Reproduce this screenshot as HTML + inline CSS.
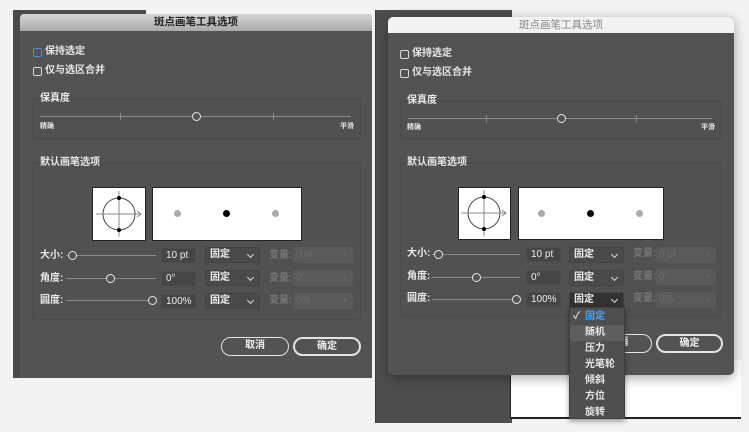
<!DOCTYPE html>
<html><head><meta charset="utf-8"><style>
*{margin:0;padding:0;box-sizing:border-box}
body{width:749px;height:432px;background:#f3f3f3;position:relative;overflow:hidden;font-family:"Liberation Sans","Noto Sans CJK SC",sans-serif;font-size:10px;color:#e8e8e8;font-weight:bold}
.a{position:absolute}
.dlg{background:#535353}
.t{position:absolute;white-space:nowrap;line-height:12px}
.cb{position:absolute;width:9px;height:9px;border:1px solid #d8d8d8;border-radius:2px}
.grp{position:absolute;border:1px solid #4b4b4b;border-radius:3px;background:#515151}
.ln{position:absolute;height:1px;background:#8a8a8a}
.knob{position:absolute;width:9px;height:9px;border:1.5px solid #e8e8e8;border-radius:50%;background:#535353}
.inp{position:absolute;height:15px;background:#464646;border:1px solid #4c4c4c;font-size:10px;line-height:13px;padding-left:4px;color:#eee;font-weight:normal}
.dd{position:absolute;height:16px;background:#4a4a4a;border:1px solid #444;border-radius:2px;line-height:14px;padding-left:4px;font-size:10px;color:#eee}
.dd:after{content:"";position:absolute;right:6px;top:4px;width:4px;height:4px;border-right:1px solid #ddd;border-bottom:1px solid #ddd;transform:rotate(45deg)}
.dis{position:absolute;height:16px;background:#5a5a5a;border-radius:2px;color:#6b6b6b;line-height:16px;padding-left:3px;font-weight:normal}
.dis:after{content:"›";position:absolute;right:6px;top:0;color:#707070}
.btn{position:absolute;height:19px;border:1.5px solid #e4e4e4;border-radius:10px;text-align:center;line-height:16px;color:#f0f0f0;font-size:10px}
.wb{position:absolute;background:#fff;border:1px solid #222}
.dot{position:absolute;width:7px;height:7px;border-radius:50%}
</style></head><body>

<!-- LEFT -->
<div class="a" style="left:13px;top:10px;width:133px;height:368px;background:#4a4a4a"></div>
<div class="a" style="left:375px;top:10px;width:3px;height:413px;background:#3a3a3a"></div>
<div class="a dlg" style="left:20px;top:14px;width:352px;height:364px;border-radius:4px 4px 0 0">
 <div class="a" style="left:0;top:0;width:352px;height:17px;background:linear-gradient(#d5d5d5,#a9a9a9);border-radius:4px 4px 0 0;text-align:center;color:#222;line-height:17px;font-size:10.5px">斑点画笔工具选项</div>
</div>
<div class="cb" style="left:33px;top:48px;border-color:#4a90d9"></div><div class="t" style="left:45px;top:46px">保持选定</div>
<div class="cb" style="left:33px;top:67px"></div><div class="t" style="left:45px;top:65px">仅与选区合并</div>
<div class="grp" style="left:32px;top:98px;width:329px;height:42px"></div>
<div class="t" style="left:40px;top:93px">保真度</div>
<div class="ln" style="left:40px;top:116px;width:311px"></div>
<div class="ln" style="left:120px;top:113px;width:1px;height:7px"></div>
<div class="ln" style="left:273px;top:113px;width:1px;height:7px"></div>
<div class="knob" style="left:192px;top:112px"></div>
<div class="t" style="left:40px;top:121px;font-size:7px">精确</div>
<div class="t" style="left:340px;top:121px;font-size:7px">平滑</div>
<div class="grp" style="left:32px;top:162px;width:329px;height:158px"></div>
<div class="t" style="left:40px;top:157px">默认画笔选项</div>
<div class="wb" style="left:92px;top:187px;width:54px;height:54px">
<svg width="52" height="52" style="position:absolute;left:0;top:0"><circle cx="26" cy="26" r="16" fill="none" stroke="#444" stroke-width="1"/><line x1="3" y1="26" x2="48" y2="26" stroke="#888"/><line x1="26" y1="3" x2="26" y2="49" stroke="#888"/><path d="M44 23 L48 26 L44 29" fill="none" stroke="#888"/><circle cx="26" cy="10" r="2" fill="#000"/><circle cx="26" cy="42" r="2" fill="#000"/></svg></div>
<div class="wb" style="left:152px;top:187px;width:150px;height:54px"></div>
<div class="dot" style="left:174px;top:210px;background:#aaa"></div>
<div class="dot" style="left:223px;top:210px;background:#000"></div>
<div class="dot" style="left:272px;top:210px;background:#aaa"></div>

<div class="t" style="left:40px;top:250px">大小:</div>
<div class="ln" style="left:66px;top:255px;width:90px"></div><div class="knob" style="left:68px;top:251px"></div>
<div class="inp" style="left:161px;top:248px;width:35px">10 pt</div>
<div class="dd" style="left:205px;top:247px;width:55px">固定</div>
<div class="t" style="left:269px;top:250px;color:#777">变量:</div><div class="dis" style="left:293px;top:247px;width:60px">0 pt</div>

<div class="t" style="left:40px;top:273px">角度:</div>
<div class="ln" style="left:66px;top:278px;width:90px"></div><div class="knob" style="left:106px;top:274px"></div>
<div class="inp" style="left:161px;top:271px;width:35px">0°</div>
<div class="dd" style="left:205px;top:270px;width:55px">固定</div>
<div class="t" style="left:269px;top:273px;color:#777">变量:</div><div class="dis" style="left:293px;top:270px;width:60px">0°</div>

<div class="t" style="left:40px;top:295px">圆度:</div>
<div class="ln" style="left:66px;top:300px;width:86px"></div><div class="knob" style="left:148px;top:296px"></div>
<div class="inp" style="left:161px;top:294px;width:35px">100%</div>
<div class="dd" style="left:205px;top:293px;width:55px">固定</div>
<div class="t" style="left:269px;top:295px;color:#777">变量:</div><div class="dis" style="left:293px;top:293px;width:60px">0%</div>

<div class="btn" style="left:221px;top:337px;width:68px">取消</div>
<div class="btn" style="left:293px;top:337px;width:68px;border-width:2px">确定</div>

<!-- RIGHT -->
<div class="a" style="left:376px;top:10px;width:136px;height:413px;background:#4e4e4e"></div>
<div class="a" style="left:510px;top:360px;width:231px;height:59px;background:#fff;border-left:1px solid #222;border-bottom:2px solid #222"></div>
<div class="a dlg" style="left:388px;top:17px;width:346px;height:358px;border-radius:5px;box-shadow:0 3px 12px rgba(0,0,0,.35)">
 <div class="a" style="left:0;top:0;width:346px;height:16px;background:#f2f2f2;border-radius:5px 5px 0 0;text-align:center;color:#888;line-height:16px;font-size:10.5px;font-weight:normal">斑点画笔工具选项</div>
</div>
<div class="cb" style="left:400px;top:50px"></div><div class="t" style="left:412px;top:48px">保持选定</div>
<div class="cb" style="left:400px;top:69px"></div><div class="t" style="left:412px;top:67px">仅与选区合并</div>
<div class="grp" style="left:400px;top:100px;width:322px;height:40px"></div>
<div class="t" style="left:407px;top:95px">保真度</div>
<div class="ln" style="left:408px;top:118px;width:304px"></div>
<div class="ln" style="left:486px;top:115px;width:1px;height:7px"></div>
<div class="ln" style="left:636px;top:115px;width:1px;height:7px"></div>
<div class="knob" style="left:557px;top:114px"></div>
<div class="t" style="left:407px;top:122px;font-size:7px">精确</div>
<div class="t" style="left:701px;top:122px;font-size:7px">平滑</div>
<div class="grp" style="left:400px;top:162px;width:322px;height:155px"></div>
<div class="t" style="left:407px;top:157px">默认画笔选项</div>
<div class="wb" style="left:458px;top:187px;width:53px;height:53px">
<svg width="51" height="51" style="position:absolute;left:0;top:0"><circle cx="25" cy="25" r="16" fill="none" stroke="#444"/><line x1="2" y1="25" x2="47" y2="25" stroke="#888"/><line x1="25" y1="2" x2="25" y2="48" stroke="#888"/><path d="M43 22 L47 25 L43 28" fill="none" stroke="#888"/><circle cx="25" cy="9" r="2" fill="#000"/><circle cx="25" cy="41" r="2" fill="#000"/></svg></div>
<div class="wb" style="left:518px;top:187px;width:146px;height:53px"></div>
<div class="dot" style="left:538px;top:210px;background:#aaa"></div>
<div class="dot" style="left:587px;top:210px;background:#000"></div>
<div class="dot" style="left:636px;top:210px;background:#aaa"></div>

<div class="t" style="left:407px;top:248px">大小:</div>
<div class="ln" style="left:432px;top:254px;width:88px"></div><div class="knob" style="left:434px;top:250px"></div>
<div class="inp" style="left:526px;top:247px;width:35px">10 pt</div>
<div class="dd" style="left:569px;top:247px;width:55px">固定</div>
<div class="t" style="left:633px;top:248px;color:#777">变量:</div><div class="dis" style="left:656px;top:247px;width:60px">0 pt</div>

<div class="t" style="left:407px;top:271px">角度:</div>
<div class="ln" style="left:432px;top:277px;width:88px"></div><div class="knob" style="left:472px;top:273px"></div>
<div class="inp" style="left:526px;top:270px;width:35px">0°</div>
<div class="dd" style="left:569px;top:270px;width:55px">固定</div>
<div class="t" style="left:633px;top:271px;color:#777">变量:</div><div class="dis" style="left:656px;top:269px;width:60px">0°</div>

<div class="t" style="left:407px;top:293px">圆度:</div>
<div class="ln" style="left:432px;top:299px;width:82px"></div><div class="knob" style="left:512px;top:295px"></div>
<div class="inp" style="left:526px;top:292px;width:35px">100%</div>
<div class="dd" style="left:569px;top:292px;width:55px;background:#333">固定</div>
<div class="t" style="left:633px;top:293px;color:#777">变量:</div><div class="dis" style="left:656px;top:292px;width:60px">0%</div>

<div class="btn" style="left:585px;top:334px;width:67px">取消</div>
<div class="btn" style="left:656px;top:334px;width:67px;border-width:2px">确定</div>

<div class="a" style="left:569px;top:307px;width:56px;height:112px;background:#4f4f4f;border:1px solid #3e3e3e;box-shadow:0 2px 5px rgba(0,0,0,.4)">
 <div class="a" style="left:0;top:17px;width:54px;height:16px;background:#5e5e5e"></div>
 <div class="t" style="left:3px;top:3px;color:#ddd">✓</div>
 <div class="t" style="left:15px;top:3px;color:#4aa3f0">固定</div>
 <div class="t" style="left:15px;top:19px">随机</div>
 <div class="t" style="left:15px;top:35px">压力</div>
 <div class="t" style="left:15px;top:51px">光笔轮</div>
 <div class="t" style="left:15px;top:67px">倾斜</div>
 <div class="t" style="left:15px;top:83px">方位</div>
 <div class="t" style="left:15px;top:99px">旋转</div>
</div>
</body></html>
